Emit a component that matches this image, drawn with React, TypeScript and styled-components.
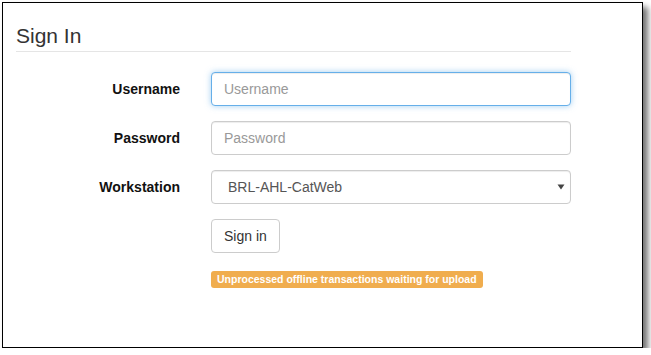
import React from "react";
import styled, { createGlobalStyle } from "styled-components";

const GlobalStyle = createGlobalStyle`
  html, body {
    margin: 0;
    padding: 0;
    background: #ffffff;
  }
  body {
    font-family: "Liberation Sans", Arial, sans-serif;
    font-size: 14px;
    color: #333333;
  }
`;

const fields = [
  { id: "username", label: "Username", placeholder: "Username", focused: true },
  { id: "password", label: "Password", placeholder: "Password", focused: false },
];

function App() {
  return (
    <>
      <GlobalStyle />
      <Frame>
        <Panel>
          <Legend>Sign In</Legend>
          <Form onSubmit={e => e.preventDefault()}>
            {fields.map(field => (
              <FormRow key={field.id}>
                <Label htmlFor={field.id}>{field.label}</Label>
                <TextInput
                  id={field.id}
                  type={field.id === "password" ? "password" : "text"}
                  placeholder={field.placeholder}
                  $focused={field.focused}
                />
              </FormRow>
            ))}
            <FormRow>
              <Label htmlFor="workstation">Workstation</Label>
              <SelectWrap>
                <Select id="workstation" defaultValue="BRL-AHL-CatWeb">
                  <option>BRL-AHL-CatWeb</option>
                </Select>
                <Caret width="8" height="6" viewBox="0 0 8 6">
                  <path d="M0.5 0.5 H7.5 L4 5.5 Z" fill="#444" />
                </Caret>
              </SelectWrap>
            </FormRow>
            <FormRow>
              <span />
              <div>
                <Button type="submit">Sign in</Button>
              </div>
            </FormRow>
            <FormRow>
              <span />
              <div>
                <WarningLabel>Unprocessed offline transactions waiting for upload</WarningLabel>
              </div>
            </FormRow>
          </Form>
        </Panel>
      </Frame>
    </>
  );
}

export default App;

const Frame = styled.div`
  margin: 2px 0 0 2px;
  width: 639px;
  height: 344px;
  border: 1px solid #000000;
  background: #ffffff;
  box-shadow: 5px 5px 6px rgba(0, 0, 0, 0.55);
  box-sizing: content-box;
`;

const Panel = styled.div`
  width: 555px;
  padding: 18px 0 0 13px;
`;

const Legend = styled.div`
  font-size: 21px;
  line-height: 30px;
  color: #333333;
  border-bottom: 1px solid #e5e5e5;
  margin-bottom: 20px;
`;

const Form = styled.form`
  display: flex;
  flex-direction: column;
  gap: 15px;
`;

const FormRow = styled.div`
  display: grid;
  grid-template-columns: 164px 360px;
  column-gap: 31px;
  align-items: center;
`;

const Label = styled.label`
  font-weight: bold;
  text-align: right;
  color: #111111;
  font-size: 14px;
`;

const controlBase = `
  box-sizing: border-box;
  width: 100%;
  height: 34px;
  padding: 6px 12px;
  font-family: "Liberation Sans", Arial, sans-serif;
  font-size: 14px;
  line-height: 20px;
  color: #555555;
  background: #ffffff;
  border: 1px solid #cccccc;
  border-radius: 4px;
  outline: none;
  margin: 0;
`;

const TextInput = styled.input<{ $focused?: boolean }>`
  ${controlBase}
  border-color: ${p => (p.$focused ? "#66afe9" : "#cccccc")};
  box-shadow: ${p =>
    p.$focused
      ? "inset 0 1px 1px rgba(0,0,0,.075), 0 0 6px rgba(102,175,233,.6)"
      : "inset 0 1px 1px rgba(0,0,0,.075)"};
  &::placeholder {
    color: #999999;
  }
`;

const SelectWrap = styled.div`
  position: relative;
`;

const Select = styled.select`
  ${controlBase}
  appearance: none;
  padding-left: 16px;
  box-shadow: inset 0 1px 1px rgba(0, 0, 0, 0.075);
`;

const Caret = styled.svg`
  position: absolute;
  right: 6px;
  top: 14px;
  pointer-events: none;
`;

const Button = styled.button`
  box-sizing: border-box;
  height: 34px;
  padding: 6px 12px;
  font-family: "Liberation Sans", Arial, sans-serif;
  font-size: 14px;
  line-height: 20px;
  color: #333333;
  background: #ffffff;
  border: 1px solid #cccccc;
  border-radius: 4px;
  cursor: pointer;
`;

const WarningLabel = styled.span`
  display: inline-block;
  margin-top: 3px;
  padding: 2px 6px 3px;
  font-size: 10.5px;
  line-height: 12px;
  font-weight: bold;
  color: #ffffff;
  background: #f0ad4e;
  border-radius: 3px;
  white-space: nowrap;
`;
